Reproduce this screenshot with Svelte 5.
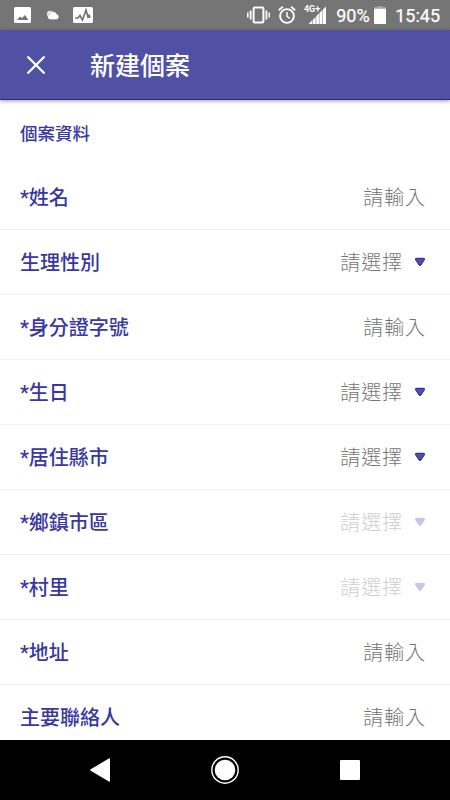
<script>
  const fields = [
    { label: '*姓名', kind: 'input' },
    { label: '生理性別', kind: 'select' },
    { label: '*身分證字號', kind: 'input' },
    { label: '*生日', kind: 'select' },
    { label: '*居住縣市', kind: 'select' },
    { label: '*鄉鎮市區', kind: 'select', disabled: true },
    { label: '*村里', kind: 'select', disabled: true },
    { label: '*地址', kind: 'input' },
    { label: '主要聯絡人', kind: 'input' }
  ];
</script>

<div class="screen">
  <div class="status">
    <div class="notifications">
      <svg class="picture" width="17" height="16" viewBox="0 0 17 16">
        <rect width="17" height="16" rx="1.5" fill="#fff" />
        <path d="M3 13L6 9.5L8 11L11 8L14.5 13Z" fill="#757575" />
      </svg>
      <svg class="cloud" width="14" height="10" viewBox="0 0 14 10">
        <circle cx="4.2" cy="4" r="3.3" fill="#e8e8e8" />
        <path d="M3.7 9.4A2.5 2.5 0 0 1 3.4 4.6A3.9 3.9 0 0 1 10.7 4A2.8 2.8 0 0 1 10.8 9.4Z" fill="#fff" stroke="#757575" stroke-width=".3" />
      </svg>
      <svg class="activity" width="20" height="16" viewBox="0 0 20 16">
        <rect width="20" height="16" rx="1.5" fill="#fff" />
        <path d="M2 11H5L7 8.5L9.5 13L13 3L15 10L16.5 7.5" fill="none" stroke="#757575" stroke-width="1.7" />
        <circle cx="16" cy="9.5" r="1.6" fill="#757575" />
      </svg>
    </div>
    <div class="system">
      <svg class="vibrate" width="23" height="18" viewBox="0 0 23 18" fill="none" stroke="#fff">
        <rect x="6.6" y="1.5" width="9.8" height="15" rx="1" stroke-width="2" />
        <path d="M3.6 4.5V13.5M19.4 4.5V13.5" stroke-width="1.8" />
        <path d="M.8 6.5V11.5M22.2 6.5V11.5" stroke-width="1.5" />
      </svg>
      <svg class="alarm" width="18" height="18" viewBox="0 0 18 18" fill="none" stroke="#fff">
        <circle cx="9" cy="10" r="6.9" stroke-width="1.9" />
        <path d="M.8 4.3L4.9 .8M17.2 4.3L13.1 .8" stroke-width="1.8" />
        <path d="M9 6V10.4L12 12.5" stroke-width="1.5" />
      </svg>
      <svg class="signal" width="24" height="20" viewBox="0 0 24 20">
        <text x="0" y="6.8" textLength="16" lengthAdjust="spacingAndGlyphs">4G+</text>
        <path d="M4.5 19L8 15.5V19ZM8.6 14.9L11.6 11.9V19H8.6ZM12.2 11.3L14.9 8.6V19H12.2ZM15.4 8.1L18.2 5.3V19H15.4ZM18.7 4.8L22 1.5V19H18.7Z" fill="#fff" />
      </svg>
      <span class="percent">90%</span>
      <svg class="battery" width="12" height="18" viewBox="0 0 12 18">
        <path d="M3.5 0H8.5V1H11A1 1 0 0 1 12 2V3H0V2A1 1 0 0 1 1 1H3.5Z" fill="#a3a3a3" />
        <path d="M0 2.7H12V17A1 1 0 0 1 11 18H1A1 1 0 0 1 0 17Z" fill="#fff" />
      </svg>
      <span class="time">15:45</span>
    </div>
  </div>

  <header>
    <svg class="close" width="18" height="18" viewBox="0 0 18 18">
      <path d="M1.2 1.2L16.8 16.8M16.8 1.2L1.2 16.8" stroke="#fff" stroke-width="2.3" stroke-linecap="round" />
    </svg>
    <h1>新建個案</h1>
  </header>

  <main>
    <h2>個案資料</h2>
    {#each fields as field}
      <div class="row" class:disabled={field.disabled}>
        <span class="label">{field.label}</span>
        <span class="value">{field.kind === 'select' ? '請選擇' : '請輸入'}</span>
        {#if field.kind === 'select'}
          <svg class="arrow" width="12" height="10" viewBox="0 0 12 10">
            <path d="M1.9 1.3H10.1Q11 1.5 10.4 2.8L7 8Q6 9.1 5 8L1.6 2.8Q1 1.5 1.9 1.3Z" />
          </svg>
        {/if}
      </div>
    {/each}
  </main>

  <nav>
    <svg class="back" width="21" height="26" viewBox="0 0 21 26">
      <path d="M19.3 1.3L.7 12.2Q-.3 13 .7 13.8L19.3 24.7Q20 25 20 24V2Q20 1 19.3 1.3Z" fill="#fff" />
    </svg>
    <svg class="home" width="28" height="28" viewBox="0 0 28 28">
      <circle cx="14" cy="14" r="13.2" fill="none" stroke="#fff" stroke-width="1.4" />
      <circle cx="14" cy="14" r="10.3" fill="#fff" />
    </svg>
    <div class="recent"></div>
  </nav>
</div>

<style>
  .screen {
    width: 450px;
    height: 800px;
    display: flex;
    flex-direction: column;
    overflow: hidden;
    background: #fff;
    font-family: 'Noto Sans CJK TC', sans-serif;
  }
  svg { display: block; flex: none; }
  .status {
    height: 30px;
    flex: none;
    display: flex;
    justify-content: space-between;
    background: #757575;
    color: #fff;
    font-family: Roboto, sans-serif;
  }
  .notifications, .system { display: flex; align-items: center; }
  .notifications { padding-left: 14px; }
  .cloud { margin-left: 15px; }
  .activity { margin-left: 13px; }
  .system { padding-right: 10px; }
  .alarm { margin-left: 8px; }
  .signal { margin-left: 8px; }
  .signal text { font: 700 8.5px Roboto, sans-serif; fill: #fff; }
  .percent, .time { font-size: 18px; line-height: 30px; padding-top: 2px; -webkit-text-stroke: .25px #fff; }
  .percent { margin-left: 8px; width: 33px; }
  .battery { margin-left: 5px; }
  .time { margin-left: 9px; }
  header {
    height: 70px;
    flex: none;
    box-sizing: border-box;
    display: flex;
    align-items: center;
    padding-left: 27px;
    background: #5050a5;
    border-bottom: 1px solid #292990;
    box-shadow: 0 1px 4px rgba(0, 0, 0, .4);
    z-index: 1;
  }
  h1 { margin: 0 0 2px 45px; font-size: 25px; line-height: 36px; font-weight: 500; color: #fff; }
  main { height: 640px; flex: none; overflow: hidden; }
  h2 {
    margin: 0;
    height: 65px;
    padding-left: 20px;
    font-size: 17.5px;
    line-height: 65px;
    font-weight: 500;
    color: #3838a0;
  }
  .row {
    height: 65px;
    box-sizing: border-box;
    display: flex;
    align-items: center;
    padding: 0 24px 0 20px;
    border-bottom: 1px solid #f0f0f0;
  }
  .label {
    flex: 1;
    padding-top: 2px;
    font-family: Roboto, 'Noto Sans CJK TC', sans-serif;
    font-size: 20px;
    line-height: 30px;
    font-weight: 500;
    color: #3838a0;
  }
  .value { font-size: 20px; line-height: 30px; letter-spacing: .9px; font-weight: 300; color: #747474; }
  .arrow { margin-left: 11px; fill: #5050a8; stroke: #2020a0; stroke-width: 1; }
  .disabled .value { color: #cdcdcd; }
  .disabled .arrow { fill: #c9c6e5; stroke: #c9c6e5; }
  nav {
    height: 60px;
    flex: none;
    display: flex;
    align-items: center;
    background: #000;
  }
  .back { margin-left: 90px; }
  .home { margin-left: 100px; }
  .recent { width: 20px; height: 20px; margin-left: 101px; border-radius: 1px; background: #fff; }
</style>
